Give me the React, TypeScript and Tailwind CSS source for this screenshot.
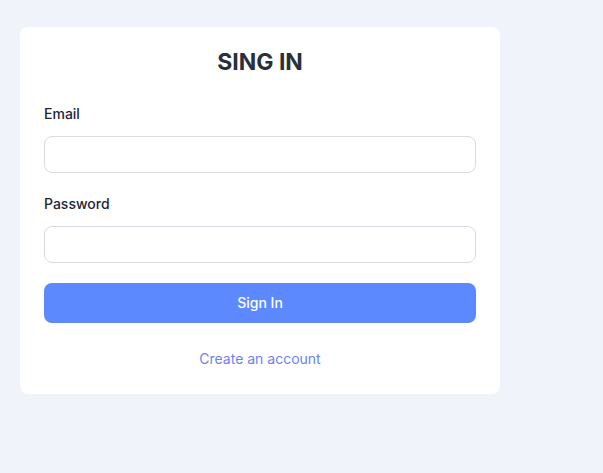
export default function App() {
  return (
    <div className="min-h-[473px] w-full bg-[#f0f3f9] pl-5 pt-[27px] font-['Inter',sans-serif]">
      <div className="w-[480px] rounded-lg bg-white px-6 pt-5 pb-[25px]">
        <h1 className="text-center text-[23px] leading-[30px] font-bold text-[#29303d]">SING IN</h1>

        <form className="mt-[27px]" onSubmit={(e) => e.preventDefault()}>
          <label className="block text-sm leading-5 font-medium text-[#1e2535]">Email</label>
          <input
            type="email"
            className="mt-3 block h-[37px] w-full rounded-lg border border-[#d7dbe2] bg-white px-3 text-sm outline-none"
          />

          <label className="mt-[21px] block text-sm leading-5 font-medium text-[#1e2535]">Password</label>
          <input
            type="password"
            className="mt-3 block h-[37px] w-full rounded-lg border border-[#d7dbe2] bg-white px-3 text-sm outline-none"
          />

          <button
            type="submit"
            className="mt-5 block h-10 w-full rounded-lg bg-[#5d89fe] text-sm font-medium text-white"
          >
            Sign In
          </button>
        </form>

        <div className="mt-[26px] text-center text-sm leading-5 text-[#6a83f2]">
          <a href="#">Create an account</a>
        </div>
      </div>
    </div>
  );
}
